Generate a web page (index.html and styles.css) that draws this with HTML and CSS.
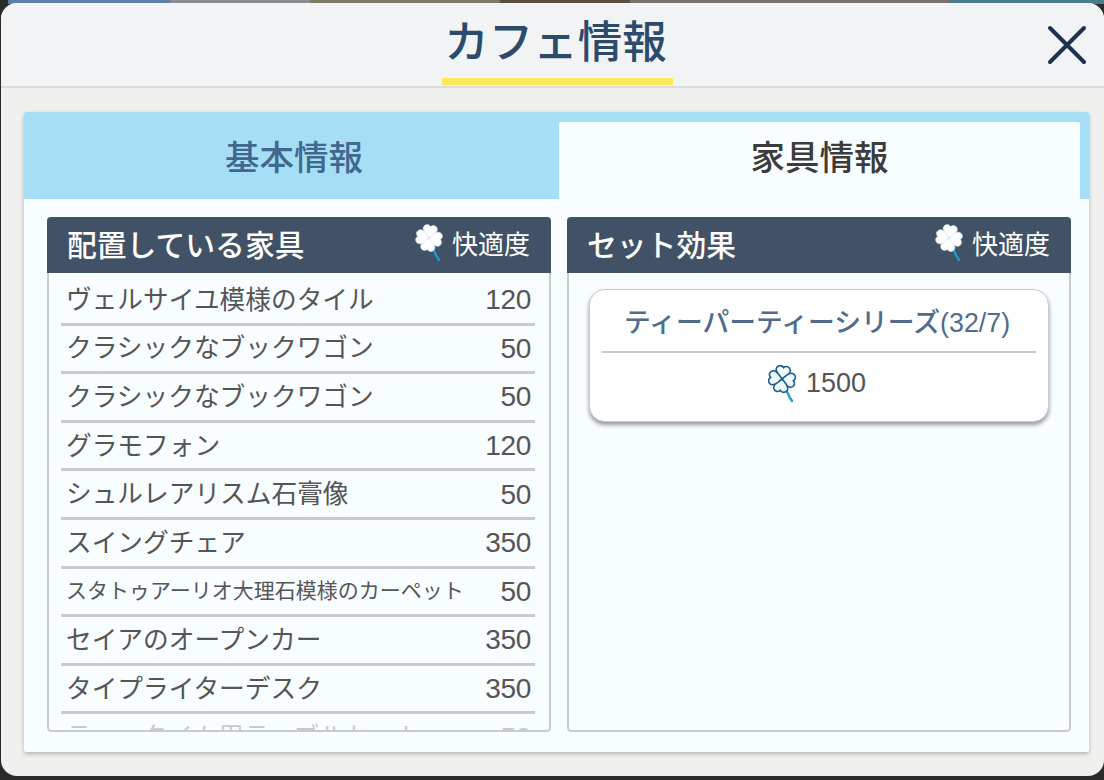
FILE: index.html
```html
<!DOCTYPE html>
<html lang="ja">
<head>
  <meta charset="UTF-8">
  <meta name="viewport" content="width=device-width, initial-scale=1.0">
  <title>カフェ情報</title>
  <link rel="stylesheet" href="styles.css">
</head>
<body>
  <svg class="defs" width="0" height="0">
    <symbol id="clover" viewBox="0 0 30 38">
      <path class="clover-stem" d="M15 15 C17 22 19 29 24 36"/>
      <g transform="translate(14 14)">
        <path class="clover-petal" transform="rotate(8)" d="M0 0 C-3 -3 -8 -6 -7 -10 C-6 -13.500 -2 -14 0 -11.500 C2 -14 6 -13.500 7 -10 C8 -6 3 -3 0 0Z"/>
        <path class="clover-petal" transform="rotate(98)" d="M0 0 C-3 -3 -8 -6 -7 -10 C-6 -13.500 -2 -14 0 -11.500 C2 -14 6 -13.500 7 -10 C8 -6 3 -3 0 0Z"/>
        <path class="clover-petal" transform="rotate(188)" d="M0 0 C-3 -3 -8 -6 -7 -10 C-6 -13.500 -2 -14 0 -11.500 C2 -14 6 -13.500 7 -10 C8 -6 3 -3 0 0Z"/>
        <path class="clover-petal" transform="rotate(278)" d="M0 0 C-3 -3 -8 -6 -7 -10 C-6 -13.500 -2 -14 0 -11.500 C2 -14 6 -13.500 7 -10 C8 -6 3 -3 0 0Z"/>
      </g>
    </symbol>
  </svg>

  <div class="modal">
    <header class="modal-head">
      <h1 class="modal-title">カフェ情報</h1>
      <button class="close" aria-label="閉じる">
        <svg width="40" height="40" viewBox="0 0 40 40"><path d="M3 3 L37 37 M37 3 L3 37"/></svg>
      </button>
    </header>

    <div class="modal-body">
      <div class="sheet">
        <div class="tabs">
          <div class="tab">基本情報</div>
          <div class="tab active">家具情報</div>
        </div>

        <div class="columns">
          <section class="panel">
            <div class="panel-head">
              <span class="panel-title">配置している家具</span>
              <span class="comfort"><svg class="clover-icon"><use href="#clover"/></svg>快適度</span>
            </div>
            <ul class="list">
              <li><span>ヴェルサイユ模様のタイル</span><b>120</b></li>
              <li><span>クラシックなブックワゴン</span><b>50</b></li>
              <li><span>クラシックなブックワゴン</span><b>50</b></li>
              <li><span>グラモフォン</span><b>120</b></li>
              <li><span>シュルレアリスム石膏像</span><b>50</b></li>
              <li><span>スイングチェア</span><b>350</b></li>
              <li><span class="small">スタトゥアーリオ大理石模様のカーペット</span><b>50</b></li>
              <li><span>セイアのオープンカー</span><b>350</b></li>
              <li><span>タイプライターデスク</span><b>350</b></li>
              <li class="cut"><span>ティータイム用テーブルセット</span><b>50</b></li>
            </ul>
          </section>

          <section class="panel">
            <div class="panel-head">
              <span class="panel-title">セット効果</span>
              <span class="comfort"><svg class="clover-icon"><use href="#clover"/></svg>快適度</span>
            </div>
            <div class="set-wrap">
              <div class="set-card">
                <div class="set-name">ティーパーティーシリーズ(32/7)</div>
                <div class="set-value"><svg class="clover-icon outlined"><use href="#clover"/></svg>1500</div>
              </div>
            </div>
          </section>
        </div>
      </div>
    </div>
  </div>
</body>
</html>
```

FILE: styles.css
```css
* {
  box-sizing: border-box;
}
html, body {
  height: 100%;
}
body {
  margin: 0;
  padding: 3px 0 4px 1px;
  overflow: hidden;
  font-family: "Liberation Sans", "Noto Sans CJK JP", sans-serif;
  color: #555;
  background: linear-gradient(90deg, #2b2b2b 0 8px, #5d7fa6 8px 170px, #8a8d90 170px 310px, #7d7a62 310px 500px, #5c5040 500px 630px, #77746e 630px 950px, #4c7c8c 950px 1104px) top / 100% 4px no-repeat, #2b2b2b;
}
.defs {
  display: block;
  height: 0;
}
.modal {
  height: 100%;
  display: flex;
  flex-direction: column;
  border-radius: 16px;
  overflow: hidden;
  background: #f0f0ee;
}

/* header */
.modal-head {
  height: 85px;
  flex: none;
  display: flex;
  justify-content: center;
  background: #f1f3f5;
  border-bottom: 2px solid #dcdcdc;
  padding-left: 10px;
  position: relative;
}
.modal-title {
  margin: 0;
  height: 82px;
  padding: 0 6px 0 2px;
  font-size: 44.5px;
  font-weight: 500;
  line-height: 80px;
  color: #2c4a6b;
  border-bottom: 7px solid #fbe85c;
}
.close {
  position: absolute;
  right: 17px;
  top: 22px;
  width: 40px;
  height: 40px;
  padding: 0;
  border: 0;
  background: none;
}
.close path {
  fill: none;
  stroke: #1c3250;
  stroke-width: 4;
  stroke-linecap: round;
}

/* sheet */
.modal-body {
  flex: 1;
  padding: 24px 15px 24px 23px;
  min-height: 0;
}
.sheet {
  height: 100%;
  display: flex;
  flex-direction: column;
  background: #f8fdff;
  box-shadow: 0 2px 4px rgba(0, 0, 0, 0.25);
  border-radius: 2px;
}
.tabs {
  height: 87px;
  flex: none;
  display: flex;
  padding: 10px 9px 0 0;
  background: #a6dff5;
  border-radius: 2px 2px 0 0;
}
.tab {
  flex: 1;
  padding-left: 5px;
  text-align: center;
  font-size: 34.5px;
  font-weight: 500;
  line-height: 72px;
  color: #41688f;
}
.tab.active {
  flex: none;
  width: 521px;
  padding-left: 0;
  color: #3c3c3c;
  background: #f8fdff;
  border-radius: 2px 2px 0 0;
}

/* columns */
.columns {
  flex: 1;
  min-height: 0;
  display: flex;
  gap: 16px;
  padding: 18px 17px 20px 23px;
}
.panel {
  width: 504px;
  display: flex;
  flex-direction: column;
  border-radius: 4px;
  overflow: hidden;
}
.panel-head {
  height: 56px;
  flex: none;
  padding: 0 21px 5px 20px;
  display: flex;
  align-items: center;
  justify-content: space-between;
  background: #415166;
  color: #fff;
}
.panel-title {
  font-size: 29.8px;
  font-weight: 500;
}
.comfort {
  display: flex;
  align-items: center;
  font-size: 26px;
}
.clover-icon {
  --petal: #fff;
  --edge: #cfe6f5;
  --edge-width: 0.5;
  width: 30px;
  height: 38px;
  margin-right: 7px;
}
.clover-stem {
  fill: none;
  stroke: #1e9ad6;
  stroke-width: 2.4;
  stroke-linecap: round;
}
.clover-petal {
  fill: var(--petal);
  stroke: var(--edge);
  stroke-width: var(--edge-width);
}
.clover-icon.outlined {
  --petal: #eef7fc;
  --edge: #1f5d8c;
  --edge-width: 1.6;
}

/* list */
.list,
.set-wrap {
  flex: 1;
  min-height: 0;
  margin: 0;
  border: 2px solid #c8ccd0;
  border-top: 0;
  border-radius: 0 0 4px 4px;
}
.list {
  padding: 4px 14px 0 12px;
  list-style: none;
  overflow: hidden;
}
.list li {
  height: 48.6px;
  display: flex;
  align-items: center;
  justify-content: space-between;
  padding: 0 4px 5px 5px;
  border-bottom: 3px solid #cacaca;
  font-size: 25.7px;
  white-space: nowrap;
}
.list li.cut {
  opacity: 0.3;
}
.list b {
  margin-top: 6px;
  font-size: 28px;
  font-weight: 400;
  letter-spacing: -0.3px;
}
.list .small {
  font-size: 21px;
}

/* set card */
.set-wrap {
  padding: 16px 20px;
}
.set-card {
  height: 133px;
  padding: 0 12px;
  background: #fff;
  border: 1px solid #c8ccd0;
  border-radius: 16px;
  box-shadow: 0 3px 4px rgba(0, 0, 0, 0.4);
}
.set-name {
  height: 63px;
  padding-right: 4px;
  line-height: 66px;
  text-align: center;
  font-size: 26.8px;
  font-weight: 500;
  color: #4f6c8c;
  border-bottom: 2px solid #c6c8ca;
}
.set-value {
  height: 61px;
  padding-right: 4px;
  display: flex;
  align-items: center;
  justify-content: center;
  font-size: 27px;
}
.set-value .clover-icon {
  margin-right: 8px;
}
```
